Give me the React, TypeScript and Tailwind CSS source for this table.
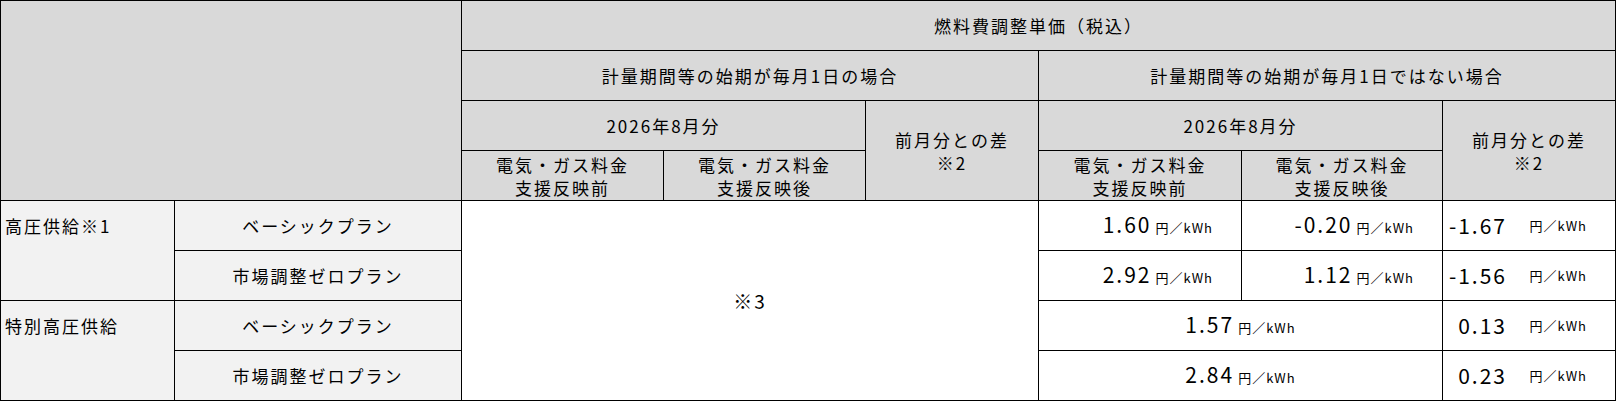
const jp = "font-['Noto_Sans_CJK_JP','Noto_Sans',sans-serif]";
const num = "font-['Liberation_Sans_Narrow','Noto_Sans_CJK_JP',sans-serif]";

const cell = "border border-black p-0 text-center align-middle";
const head = `${cell} bg-[#d9d9d9]`;
const label = `${cell} bg-[#f2f2f2]`;

const Unit = () => (
  <span className={`${jp} text-[13px] tracking-[1px] ml-[4px]`}>円／kWh</span>
);

const Price = ({ v }: { v: string }) => (
  <td className={`${cell} bg-white text-right pr-[28px]`}>
    <span className={`${num} text-[21px]`}>{v}</span>
    <Unit />
  </td>
);

const Diff = ({ v }: { v: string }) => (
  <td className={`${cell} bg-white`}>
    <div className="flex items-center justify-between pr-[28px]">
      <span className={`${num} text-[21px] inline-block w-[64px] text-right`}>{v}</span>
      <Unit />
    </div>
  </td>
);

const Merged = ({ v }: { v: string }) => (
  <td colSpan={2} className={`${cell} bg-white`}>
    <span className={`${num} text-[21px]`}>{v}</span>
    <Unit />
  </td>
);

export default function App() {
  const widths = ["w-[174px]", "w-[287px]", "w-[202px]", "w-[202px]", "w-[173px]", "w-[203px]", "w-[201px]", "w-[173px]"];

  return (
    <div className={`bg-white w-[1617px] h-[402px] text-black ${jp} text-[17px] tracking-[2px] leading-[23px]`}>
      <table className="table-fixed border-collapse w-[1615px]">
        <colgroup>
          {widths.map((w, i) => (
            <col key={i} className={w} />
          ))}
        </colgroup>
        <tbody>
          <tr className="h-[50px]">
            <td rowSpan={4} colSpan={2} className={head}></td>
            <td colSpan={6} className={head}>燃料費調整単価（税込）</td>
          </tr>
          <tr className="h-[50px]">
            <td colSpan={3} className={head}>計量期間等の始期が毎月1日の場合</td>
            <td colSpan={3} className={head}>計量期間等の始期が毎月1日ではない場合</td>
          </tr>
          <tr className="h-[50px]">
            <td colSpan={2} className={head}>2026年8月分</td>
            <td rowSpan={2} className={head}>
              前月分との差
              <br />
              ※2
            </td>
            <td colSpan={2} className={head}>2026年8月分</td>
            <td rowSpan={2} className={head}>
              前月分との差
              <br />
              ※2
            </td>
          </tr>
          <tr className="h-[50px]">
            <td className={head}>電気・ガス料金<br />支援反映前</td>
            <td className={head}>電気・ガス料金<br />支援反映後</td>
            <td className={head}>電気・ガス料金<br />支援反映前</td>
            <td className={head}>電気・ガス料金<br />支援反映後</td>
          </tr>

          <tr className="h-[50px]">
            <td rowSpan={2} className={`${label} align-top text-left`}>
              <div className="h-[49px] flex items-center pl-[4px]">高圧供給※1</div>
            </td>
            <td className={label}>ベーシックプラン</td>
            <td rowSpan={4} colSpan={3} className={`${cell} bg-white text-[19px]`}>※3</td>
            <Price v="1.60" />
            <Price v="-0.20" />
            <Diff v="-1.67" />
          </tr>
          <tr className="h-[50px]">
            <td className={label}>市場調整ゼロプラン</td>
            <Price v="2.92" />
            <Price v="1.12" />
            <Diff v="-1.56" />
          </tr>
          <tr className="h-[50px]">
            <td rowSpan={2} className={`${label} align-top text-left`}>
              <div className="h-[49px] flex items-center pl-[4px]">特別高圧供給</div>
            </td>
            <td className={label}>ベーシックプラン</td>
            <Merged v="1.57" />
            <Diff v="0.13" />
          </tr>
          <tr className="h-[50px]">
            <td className={label}>市場調整ゼロプラン</td>
            <Merged v="2.84" />
            <Diff v="0.23" />
          </tr>
        </tbody>
      </table>
    </div>
  );
}
